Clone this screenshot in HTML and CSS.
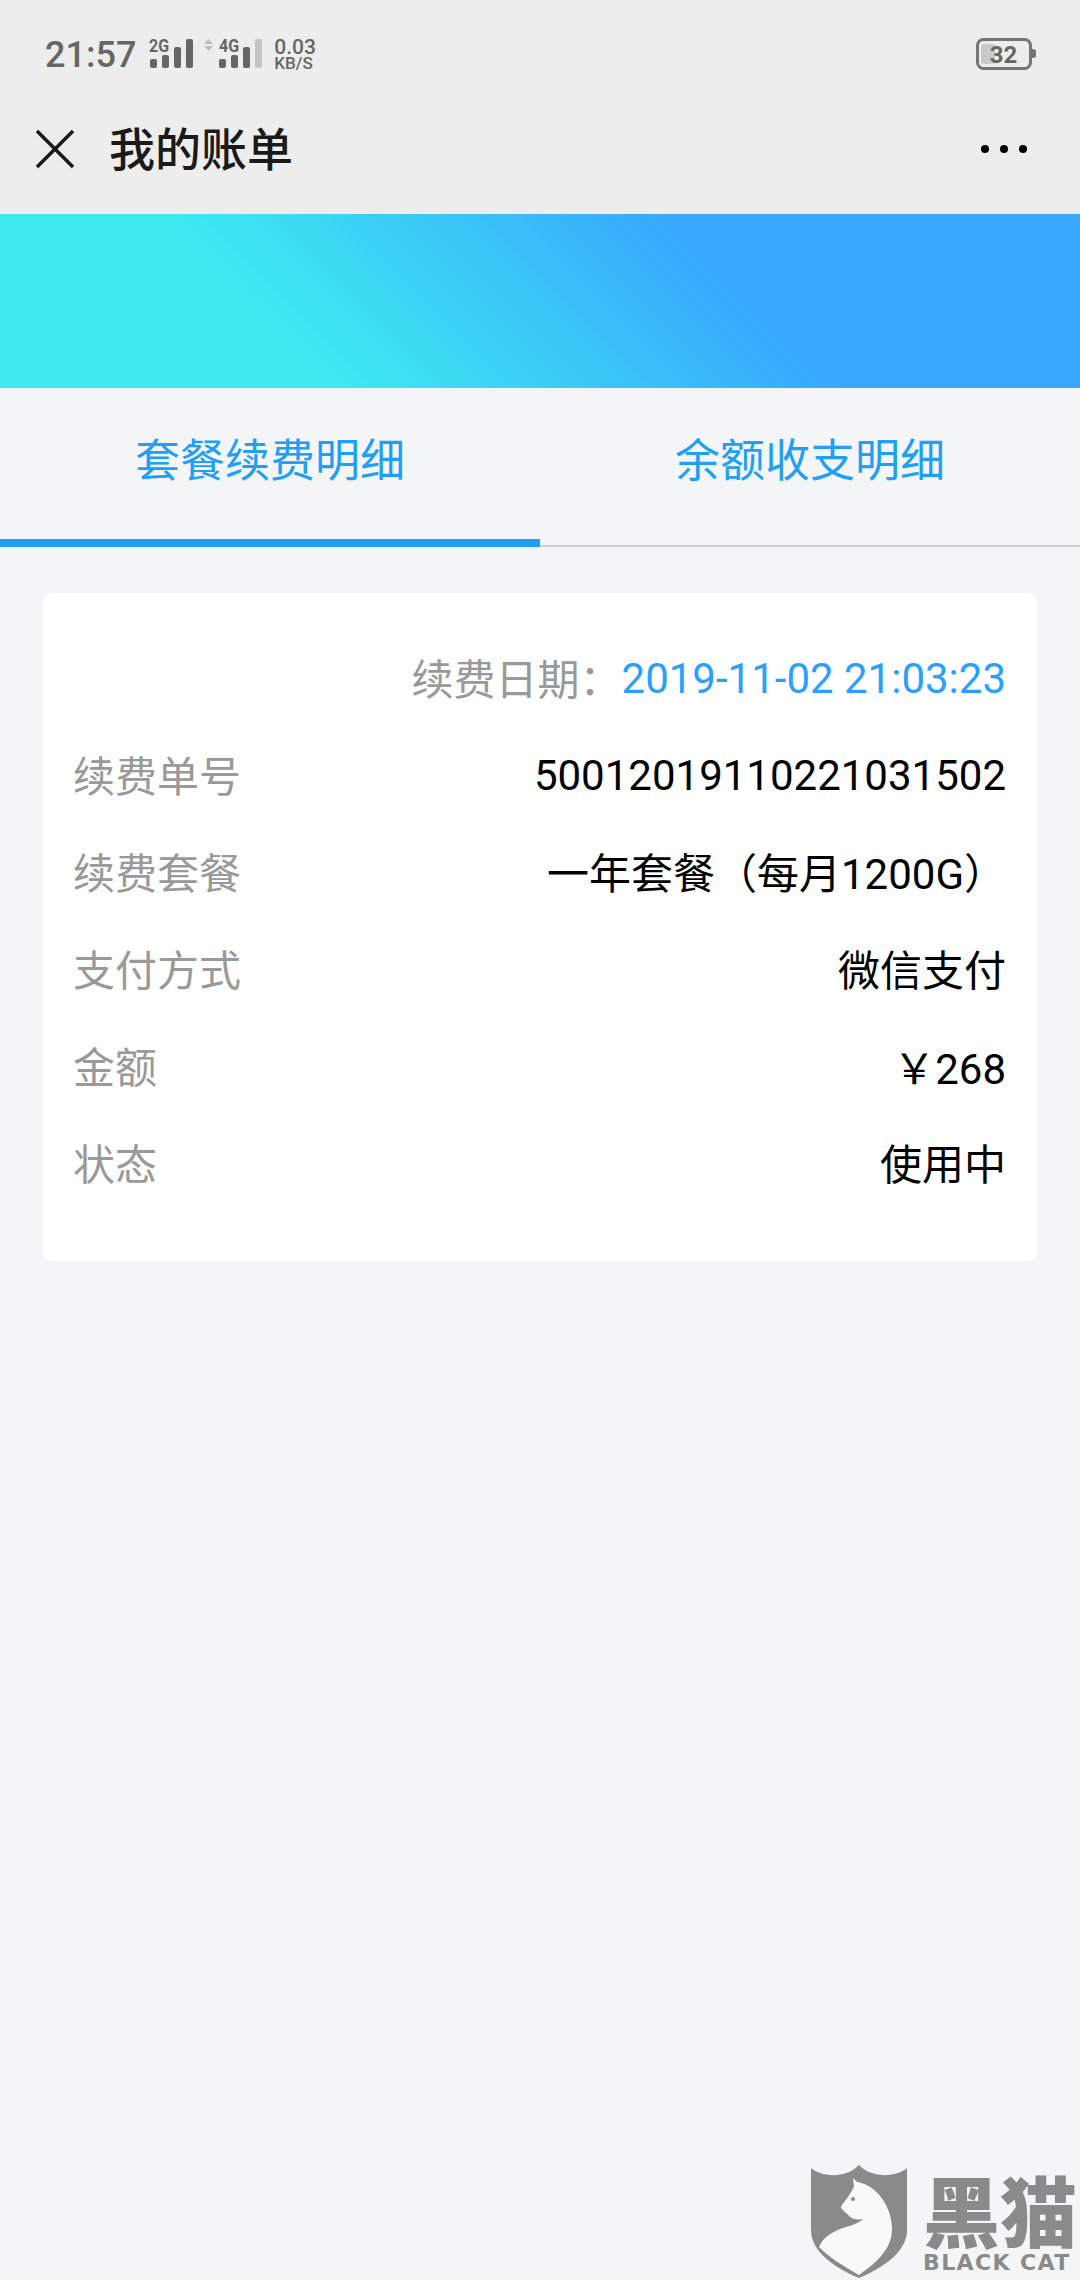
FILE: index.html
```html
<!DOCTYPE html>
<html lang="zh">
<head>
<meta charset="utf-8">
<title>我的账单</title>
<link rel="stylesheet" href="styles.css">
</head>
<body>
<div class="page">
  <header class="top">
    <div class="status">
      <div class="status-left">
        <span class="time">21:57</span>
        <svg class="sig" width="44" height="38" viewBox="0 -7 44 38">
          <text x="0" y="14" class="sig-label" textLength="20" lengthAdjust="spacingAndGlyphs">2G</text>
          <rect x="1" y="21" width="7" height="9" rx="2" fill="#666"/>
          <rect x="13" y="17" width="7" height="13" rx="2" fill="#666"/>
          <rect x="25" y="9" width="7" height="21" rx="2" fill="#666"/>
          <rect x="37" y="1" width="7" height="29" rx="2" fill="#666"/>
        </svg>
        <svg class="sig sig2" width="59" height="38" viewBox="0 -7 59 38">
          <path d="M0 6 L4.500 1 L9 6 Z M0 8 L9 8 L4.500 13 Z" fill="#bdbdbd"/>
          <text x="15" y="14" class="sig-label" textLength="20" lengthAdjust="spacingAndGlyphs">4G</text>
          <rect x="15" y="21" width="7" height="9" rx="2" fill="#666"/>
          <rect x="27" y="17" width="7" height="13" rx="2" fill="#666"/>
          <rect x="39" y="9" width="7" height="21" rx="2" fill="#666"/>
          <rect x="51" y="1" width="7" height="29" rx="2" fill="#c4c4c4"/>
        </svg>
        <div class="speed"><span class="speed-num">0.03</span><span class="speed-unit">KB/S</span></div>
      </div>
      <svg class="battery" width="60" height="32" viewBox="0 0 60 32">
        <rect x="1.500" y="1.500" width="53" height="29" rx="6" fill="none" stroke="#757575" stroke-width="3"/>
        <path d="M56 11 h1 a3.500 4.500 0 0 1 0 9 h-1 Z" fill="#757575"/>
        <rect x="5" y="6" width="14" height="20" rx="3" fill="#c9c9c9"/>
        <text x="27.500" y="25" class="bat-num">32</text>
      </svg>
    </div>
    <div class="nav">
      <div class="nav-left">
        <svg class="close" width="40" height="40" viewBox="0 0 40 40">
          <path d="M2 2 L38 38 M38 2 L2 38" stroke="#1a1a1a" stroke-width="3.500" fill="none"/>
        </svg>
        <h1 class="title">我的账单</h1>
      </div>
      <div class="more"><i></i><i></i><i></i></div>
    </div>
  </header>
  <div class="banner"></div>
  <nav class="tabs">
    <div class="tab tab-active">套餐续费明细</div>
    <div class="tab">余额收支明细</div>
  </nav>
  <section class="card">
    <div class="row row-end"><span class="label">续费日期&#xFF1A;</span><span class="value-blue">2019-11-02 21:03:23</span></div>
    <div class="row"><span class="label">续费单号</span><span class="value">50012019110221031502</span></div>
    <div class="row"><span class="label">续费套餐</span><span class="value value-cn">一年套餐&#xFF08;每月1200G&#xFF09;</span></div>
    <div class="row"><span class="label">支付方式</span><span class="value value-cn">微信支付</span></div>
    <div class="row"><span class="label">金额</span><span class="value value-yen">&#xFFE5;268</span></div>
    <div class="row"><span class="label">状态</span><span class="value value-cn">使用中</span></div>
  </section>
  <div class="watermark">
    <svg class="shield" width="97" height="114" viewBox="0 0 97 114">
      <path d="M0 3 C8 11 34 15 48 0 C62 15 88 11 96 3 L96 65 C96 86 74 102 48 113 C22 102 0 86 0 65 Z" fill="#8a8a8a"/>
      <path d="M42 13 L46 17 C66 20 81 42 81 64 C81 86 62 100 48 110 C32 101 18 92 8 82 C12 72 22 66 35 62 C42 60 48 58 52 54 C46 55 42 54 39 52 C36 48 32 46 30 43 C30 40 34 36 37 32 C39 28 42 25 43 21 Z" fill="#f9f9f9"/>
      <circle cx="42" cy="34" r="2" fill="#8a8a8a"/>
    </svg>
    <div class="wm-text">
      <span class="wm-cn">黑猫</span>
      <span class="wm-en">BLACK CAT</span>
    </div>
  </div>
</div>
</body>
</html>
```

FILE: styles.css
```css
* { box-sizing: border-box; }
html, body { margin: 0; padding: 0; }
body {
  width: 1080px;
  height: 2280px;
  overflow: hidden;
  background: #f4f5f7;
  font-family: Roboto, "Noto Sans CJK SC", sans-serif;
}
.page { position: relative; width: 1080px; height: 2280px; }

.top { height: 214px; background: #ededed; display: flex; flex-direction: column; }
.status {
  flex: none;
  height: 108px;
  padding: 38px 44px 0 45px;
  display: flex;
  justify-content: space-between;
  align-items: flex-start;
}
.status-left { display: flex; align-items: flex-start; }
.time { font-size: 36px; font-weight: 500; line-height: 32px; color: #666; margin-top: 1px; }
.sig { display: block; margin-left: 13px; margin-top: -7px; }
.sig2 { margin-left: 11px; }
.sig-label { font: 700 19px Roboto, sans-serif; fill: #666; }
.speed { display: flex; flex-direction: column; margin-left: 11px; color: #666; font-weight: 500; }
.speed-num { font-size: 21px; line-height: 18px; }
.speed-unit { font-size: 17px; line-height: 14px; }
.battery { display: block; }
.bat-num { font: 700 24px Roboto, sans-serif; fill: #666; text-anchor: middle; }

.nav {
  flex: none;
  height: 82px;
  display: flex;
  justify-content: space-between;
  align-items: center;
  padding: 0 53px 0 35px;
}
.nav-left { display: flex; align-items: center; }
.close { display: block; }
.title { margin: 2px 0 0 34px; font-size: 46px; font-weight: 500; line-height: 56px; color: #1a1a1a; }
.more { display: flex; gap: 11px; }
.more i { display: block; width: 8px; height: 8px; border-radius: 50%; background: #000; }

.banner {
  height: 174px;
  background: linear-gradient(45deg, #3eeaf0 0%, #3eeaf0 27%, #38a8fd 67%, #38a8fd 100%);
}

.tabs { height: 159px; display: flex; border-bottom: 2px solid #cfcfd1; }
.tab {
  flex: 1;
  display: flex;
  align-items: center;
  justify-content: center;
  font-size: 45px;
  color: #209ff5;
  margin-bottom: -2px;
  padding-bottom: 12px;
}
.tab-active { border-bottom: 8px solid #209ff5; }
.tab:not(.tab-active) { padding-bottom: 20px; }

.card {
  margin: 46px 42px 0;
  height: 668px;
  padding: 37px 32px 48px;
  background: #fff;
  border-radius: 10px;
}
.row {
  height: 97px;
  display: flex;
  align-items: center;
  justify-content: space-between;
  font-size: 42px;
}
.row-end { justify-content: flex-end; }
.label { color: #999; margin-bottom: 5px; }
.row:not(.row-end) .label { margin-left: -1px; }
.value { color: #000; }
.value-cn { margin-bottom: 5px; }
.value-yen { margin-bottom: 2px; }
.value-blue { color: #2ba0fb; }

.watermark {
  position: absolute;
  left: 811px;
  top: 2165px;
  display: flex;
  gap: 15px;
}
.shield { display: block; flex: none; }
.wm-text { display: flex; flex-direction: column; color: #8a8a8a; width: 156px; }
.wm-cn {
  font-family: "Noto Sans CJK SC", sans-serif;
  font-weight: 900;
  font-size: 77px;
  line-height: 76px;
  margin-top: 6px;
  white-space: nowrap;
}
.wm-en {
  font-family: "DejaVu Sans", sans-serif;
  font-weight: 700;
  font-size: 22px;
  line-height: 22px;
  margin-top: 5px;
  letter-spacing: 1.400px;
  white-space: nowrap;
}
```
